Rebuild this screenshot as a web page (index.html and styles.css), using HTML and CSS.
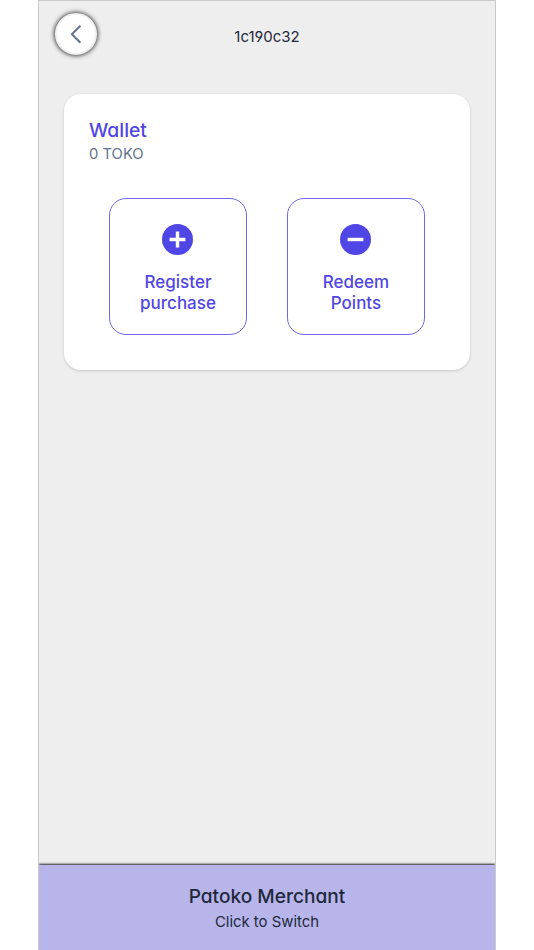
FILE: index.html
```html
<!DOCTYPE html>
<html lang="en">
<head>
    <meta charset="UTF-8">
    <meta name="viewport" content="width=device-width, initial-scale=1.0">
    <title>Wallet</title>
    <link rel="stylesheet" href="styles.css">
</head>
<body>
    <div class="app">
        <header class="top-bar">
            <button class="back-button" aria-label="Back">
                <svg width="24" height="24" viewBox="0 0 24 24" fill="none" stroke="#64748b" stroke-width="2">
                    <path d="M16.4 3.7 L7.9 12.2 L16.4 20.7"/>
                </svg>
            </button>
            <h1 class="title">1c190c32</h1>
        </header>

        <main class="content">
            <section class="card">
                <h2 class="card-title">Wallet</h2>
                <p class="balance">0 TOKO</p>
                <div class="actions">
                    <button class="action">
                        <svg width="31" height="31" viewBox="0 0 31 31">
                            <circle cx="15.5" cy="15.5" r="15.5" fill="#4f46e5"/>
                            <path d="M7.6 15.5 H23.4 M15.5 7.6 V23.4" stroke="#fff" stroke-width="3.4"/>
                        </svg>
                        <span>Register<br>purchase</span>
                    </button>
                    <button class="action">
                        <svg width="31" height="31" viewBox="0 0 31 31">
                            <circle cx="15.5" cy="15.5" r="15.5" fill="#4f46e5"/>
                            <path d="M7.6 15.5 H23.4" stroke="#fff" stroke-width="3.4"/>
                        </svg>
                        <span>Redeem<br>Points</span>
                    </button>
                </div>
            </section>
        </main>

        <footer class="switcher">
            <p class="switcher-name">Patoko Merchant</p>
            <p class="switcher-hint">Click to Switch</p>
        </footer>
    </div>
</body>
</html>
```

FILE: styles.css
```css
* {
    box-sizing: border-box;
}
body {
    margin: 0;
    background-color: #fff;
    color: #1e293b;
    font-family: Inter, sans-serif;
    font-feature-settings: "cv02", "cv03", "cv04", "cv11";
}
h1, h2, p {
    margin: 0;
}
button {
    padding: 0;
    font-family: inherit;
    cursor: pointer;
}
.app {
    display: flex;
    flex-direction: column;
    width: 458px;
    height: 950px;
    margin: 0 auto;
    border: 1px solid #c9c9cb;
    border-bottom: none;
    background-color: #eee;
}
.top-bar {
    display: grid;
    grid-template-columns: 60px 1fr 60px;
    height: 68px;
    padding-top: 12px;
}
.back-button {
    display: flex;
    align-items: center;
    justify-content: center;
    width: 42px;
    height: 42px;
    margin-left: 16px;
    border: 2px solid #f1f1f1;
    border-radius: 50%;
    background-color: #fff;
    box-shadow: 0 0 4px 1px rgba(0, 0, 0, 0.7);
}
.back-button svg {
    flex-shrink: 0;
}
.title {
    padding-top: 12px;
    font-size: 15px;
    line-height: 24px;
    font-weight: 400;
    text-align: center;
}
.content {
    flex: 1;
    padding: 24.5px 25px 0;
}
.card {
    height: 276px;
    padding: 24.5px 25px;
    border-radius: 17px;
    background-color: #fff;
    box-shadow: 0 1px 3px rgba(0, 0, 0, 0.16);
}
.card-title {
    color: #4f46e5;
    font-size: 19.3px;
    line-height: 24px;
    font-weight: 550;
}
.balance {
    color: #64748b;
    font-size: 14.8px;
    line-height: 24px;
}
.actions {
    display: flex;
    gap: 40px;
    margin-top: 32px;
    padding-left: 20px;
}
.action {
    display: flex;
    flex-direction: column;
    align-items: center;
    width: 138px;
    height: 137px;
    padding-top: 25px;
    border: 1px solid #6f68ea;
    border-radius: 17px;
    background-color: #fff;
    color: #4f46e5;
    font-size: 17px;
    line-height: 21px;
    font-weight: 500;
    font-feature-settings: normal;
}
.action svg {
    margin-right: 1px;
}
.action span {
    margin-top: 17px;
}
.switcher {
    height: 85px;
    padding-top: 18px;
    background-color: #b8b5eb;
    box-shadow: 0 -1px 2px #222;
    text-align: center;
    clip-path: inset(-5px 0 0 0);
}
.switcher-name {
    font-size: 19.1px;
    line-height: 26px;
    font-weight: 500;
}
.switcher-hint {
    font-size: 14.9px;
    line-height: 26px;
}
```
